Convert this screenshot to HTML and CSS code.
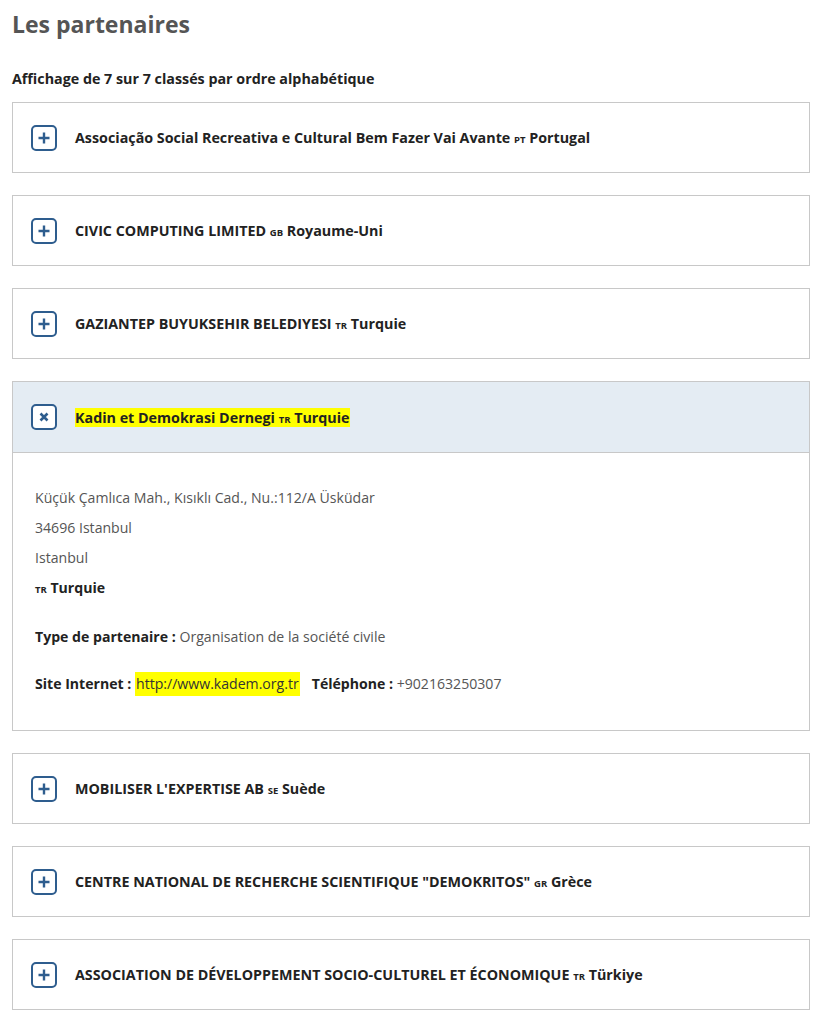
FILE: index.html
```html
<!DOCTYPE html>
<html lang="fr">
<head>
  <meta charset="UTF-8" />
  <title>Les partenaires</title>
  <link rel="stylesheet" href="styles.css">
</head>
<body>

  <main>
    <h1>Les partenaires</h1>
    <p class="count">Affichage de 7 sur 7 classés par ordre alphabétique</p>

    <div class="partner">
      <div class="partner-head">
        <span class="toggle"><svg viewBox="0 0 22 22"><path d="M11 5.5v11M5.5 11h11"/></svg></span>
        <span class="name">Associação Social Recreativa e Cultural Bem Fazer Vai Avante <span class="cc">PT</span> Portugal</span>
      </div>
    </div>

    <div class="partner">
      <div class="partner-head">
        <span class="toggle"><svg viewBox="0 0 22 22"><path d="M11 5.5v11M5.5 11h11"/></svg></span>
        <span class="name">CIVIC COMPUTING LIMITED <span class="cc">GB</span> Royaume-Uni</span>
      </div>
    </div>

    <div class="partner">
      <div class="partner-head">
        <span class="toggle"><svg viewBox="0 0 22 22"><path d="M11 5.5v11M5.5 11h11"/></svg></span>
        <span class="name">GAZIANTEP BUYUKSEHIR BELEDIYESI <span class="cc">TR</span> Turquie</span>
      </div>
    </div>

    <div class="partner open">
      <div class="partner-head">
        <span class="toggle"><svg viewBox="0 0 22 22"><path class="cross" d="M7.5 7.5l7 7M14.5 7.5l-7 7"/></svg></span>
        <span class="name"><mark>Kadin et Demokrasi Dernegi <span class="cc">TR</span> Turquie</mark></span>
      </div>
      <div class="partner-body">
        <p>Küçük Çamlıca Mah., Kısıklı Cad., Nu.:112/A Üsküdar</p>
        <p>34696 Istanbul</p>
        <p>Istanbul</p>
        <p class="country"><span class="cc">TR</span> Turquie</p>
        <p class="info"><b>Type de partenaire :</b> Organisation de la société civile</p>
        <p class="info"><b>Site Internet :</b> <a href="#"><mark>http://www.kadem.org.tr</mark></a><span class="phone"><b>Téléphone :</b> +902163250307</span></p>
      </div>
    </div>

    <div class="partner">
      <div class="partner-head">
        <span class="toggle"><svg viewBox="0 0 22 22"><path d="M11 5.5v11M5.5 11h11"/></svg></span>
        <span class="name">MOBILISER L'EXPERTISE AB <span class="cc">SE</span> Suède</span>
      </div>
    </div>

    <div class="partner">
      <div class="partner-head">
        <span class="toggle"><svg viewBox="0 0 22 22"><path d="M11 5.5v11M5.5 11h11"/></svg></span>
        <span class="name">CENTRE NATIONAL DE RECHERCHE SCIENTIFIQUE "DEMOKRITOS" <span class="cc">GR</span> Grèce</span>
      </div>
    </div>

    <div class="partner">
      <div class="partner-head">
        <span class="toggle"><svg viewBox="0 0 22 22"><path d="M11 5.5v11M5.5 11h11"/></svg></span>
        <span class="name">ASSOCIATION DE DÉVELOPPEMENT SOCIO-CULTUREL ET ÉCONOMIQUE <span class="cc">TR</span> Türkiye</span>
      </div>
    </div>
  </main>

</body>
</html>
```

FILE: styles.css
```css
body {
  font-family: 'Open Sans', 'Liberation Sans', Arial, sans-serif;
  background: white;
  margin: 0;
  padding: 0;
  color: #333;
}

main {
  width: 798px;
  padding: 0 12px;
}

h1 {
  font-size: 23px;
  font-weight: 700;
  color: #555;
  margin: 6px 0 0;
  line-height: 36px;
}

.count {
  font-size: 14.3px;
  font-weight: 700;
  color: #222;
  margin: 27px 0 0;
  line-height: 20px;
}

.partner {
  border: 1px solid #c8c8c8;
  margin-top: 13px;
  margin-bottom: 22px;
}

.partner + .partner {
  margin-top: 0;
}

.partner-head {
  height: 69px;
  display: flex;
  align-items: center;
  padding-left: 18px;
  gap: 18px;
}

.open .partner-head {
  height: 70px;
  background: #e4ecf3;
  border-bottom: 1px solid #c8c8c8;
}

.toggle {
  width: 22px;
  height: 22px;
  border: 2px solid #2e5d8e;
  border-radius: 5px;
  background: white;
  display: flex;
}

.toggle svg {
  width: 22px;
  height: 22px;
  fill: none;
  stroke: #2e5d8e;
  stroke-width: 2.4;
}

.toggle .cross {
  stroke-width: 2.6;
}

.name {
  font-size: 14.3px;
  font-weight: 700;
  color: #222;
}

.cc {
  font-size: 9.5px;
  font-weight: 700;
}

mark {
  background: #ffff00;
  color: #222;
}

.partner-body {
  padding: 30px 22px 31px;
  font-size: 14.1px;
  color: #555;
}

.partner-body p {
  margin: 0;
  line-height: 30px;
}

.country {
  font-weight: 700;
  color: #222;
}

.partner-body .info {
  margin-top: 17px;
}

.info b {
  color: #222;
}

.info a {
  color: #333;
  text-decoration: none;
}

.info a mark {
  color: #333;
  padding: 2px 1px 3px 1px;
}

.phone {
  margin-left: 12px;
}
```
